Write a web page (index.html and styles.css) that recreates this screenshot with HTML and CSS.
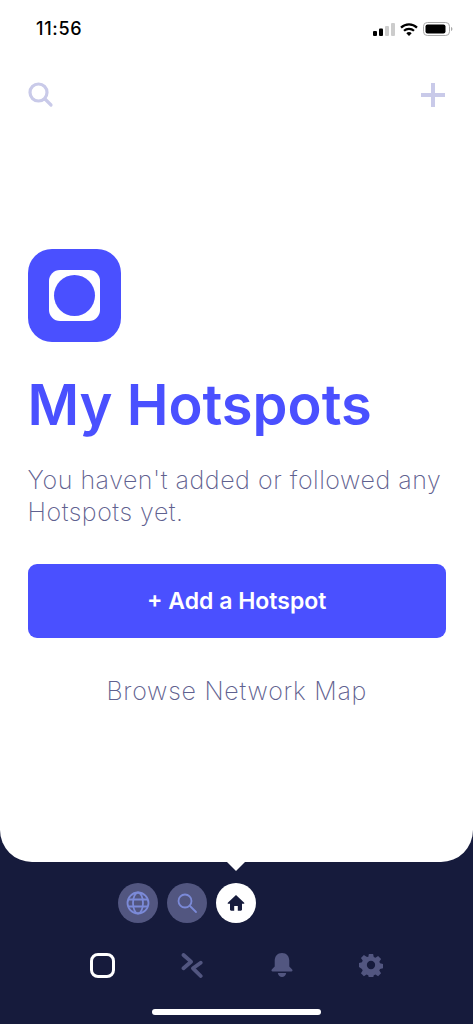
FILE: index.html
```html
<!DOCTYPE html>
<html lang="en">
<head>
    <meta charset="UTF-8">
    <meta name="viewport" content="width=device-width, initial-scale=1.0">
    <title>My Hotspots</title>
    <link rel="stylesheet" href="styles.css">
</head>
<body>
    <div class="screen">
        <div class="sheet">
            <div class="status-bar">
                <span class="clock">11:56</span>
                <div class="status-icons">
                    <svg width="22" height="13" viewBox="0 0 22 13">
                        <rect x="0" y="8" width="4" height="5" rx="1" fill="#000"/>
                        <rect x="6" y="5.5" width="4" height="7.5" rx="1" fill="#000"/>
                        <rect x="12" y="3" width="4" height="10" rx="1" fill="#ccc"/>
                        <rect x="18" y="0" width="4" height="13" rx="1" fill="#ccc"/>
                    </svg>
                    <svg width="18" height="13" viewBox="0 0 18 13">
                        <path d="M1 4.6a11.5 11.5 0 0 1 16 0" fill="none" stroke="#000" stroke-width="2.2"/>
                        <path d="M4 7.8a7.2 7.2 0 0 1 10 0" fill="none" stroke="#000" stroke-width="2.2"/>
                        <path d="M6.3 10.2a3.6 3.6 0 0 1 5.4 0L9 13z" fill="#000"/>
                    </svg>
                    <svg width="30" height="14" viewBox="0 0 30 14">
                        <rect x="0.5" y="0.5" width="26" height="13" rx="3.8" fill="none" stroke="#aaa"/>
                        <rect x="2.5" y="2.5" width="20" height="9" rx="2" fill="#000"/>
                        <path d="M28 5v4c.9-.3 1.4-1.100 1.400-2s-.5-1.700-1.400-2z" fill="#aaa"/>
                    </svg>
                </div>
            </div>

            <div class="top-actions">
                <svg width="26" height="26" viewBox="0 0 26 26">
                    <circle cx="10.500" cy="10.500" r="8.500" fill="none" stroke="#c9cae9" stroke-width="3.200"/>
                    <path d="M17 17l6 6" stroke="#c9cae9" stroke-width="3.200" stroke-linecap="round"/>
                </svg>
                <svg width="26" height="26" viewBox="0 0 26 26">
                    <path d="M13 1v24M1 13h24" stroke="#c9cae9" stroke-width="4"/>
                </svg>
            </div>

            <div class="content">
                <div class="logo">
                    <div class="logo-inner"><div class="logo-dot"></div></div>
                </div>
                <h1>My Hotspots</h1>
                <p class="intro">You haven't added or followed any Hotspots yet.</p>
                <button class="add-btn">+ Add a Hotspot</button>
                <a class="browse">Browse Network Map</a>
            </div>
            <div class="sheet-arrow"></div>
        </div>

        <div class="dock">
            <div class="switcher">
                <div class="round round-dim">
                    <svg width="24" height="24" viewBox="0 0 24 24" fill="none" stroke="#7b8ad8" stroke-width="1.800">
                        <circle cx="12" cy="12" r="10.500"/>
                        <ellipse cx="12" cy="12" rx="5" ry="10.500"/>
                        <path d="M2 8.500h20M2 15.500h20"/>
                    </svg>
                </div>
                <div class="round round-dim">
                    <svg width="22" height="22" viewBox="0 0 22 22" fill="none" stroke="#7b8ad8" stroke-width="1.800">
                        <circle cx="9" cy="9" r="6.500"/>
                        <path d="M14 14l6 6" stroke-linecap="round"/>
                    </svg>
                </div>
                <div class="round round-on">
                    <svg width="18" height="18" viewBox="0 0 18 18">
                        <path d="M9 1L.8 8.700c-.4.500 0 1.100.5 1.100H3v5.700c0 .7.500 1.200 1.200 1.200h3V12h3.600v4.700h3c.7 0 1.200-.5 1.200-1.200V9.800h1.700c.5 0 .9-.6.500-1.100z" fill="#161b3c"/>
                    </svg>
                </div>
            </div>
            <div class="tabs">
                <div class="tab-icon"><div class="tab-square"></div></div>
                <div class="tab-icon">
                    <svg width="22" height="25" viewBox="0 0 22 25" fill="none" stroke="#525680" stroke-width="3.800" stroke-linecap="round" stroke-linejoin="round">
                        <path d="M2.500 2L10 8.700l-7.500 6.600"/>
                        <path d="M19.700 9.700L12 15.300l7.700 7.700"/>
                    </svg>
                </div>
                <div class="tab-icon">
                    <svg width="22" height="25" viewBox="0 0 22 25">
                        <path d="M11 0c-4.600 0-7.300 3.300-7.300 7.800v5.700L.8 16.400c-.7.800-.3 2 .9 2h18.600c1.200 0 1.600-1.200.9-2l-2.900-2.900V7.800C18.300 3.300 15.600 0 11 0z" fill="#525680"/>
                        <path d="M6.800 20h8.400c-.5 2.700-2.200 4-4.200 4s-3.700-1.300-4.200-4z" fill="#525680"/>
                    </svg>
                </div>
                <div class="tab-icon">
                    <svg width="24" height="24" viewBox="-1 -1 26 26">
                        <path fill="#525680" fill-rule="evenodd" d="M9.700 0h4.600l.7 3.400 1.800.8 2.900-1.900 3.200 3.200-1.900 2.900.8 1.800 3.200.7v4.600l-3.200.7-.8 1.800 1.900 2.900-3.200 3.200-2.900-1.900-1.800.8-.7 3H9.700l-.7-3-1.800-.8-2.900 1.900-3.200-3.200 1.900-2.900-.8-1.800L-1 14.300V9.700l3.200-.7.8-1.800-1.900-2.900 3.200-3.200 2.900 1.900L9 3.400zM12 7.500a4.500 4.500 0 1 0 0 9 4.500 4.500 0 0 0 0-9z"/>
                    </svg>
                </div>
            </div>
            <div class="home-bar"></div>
        </div>
    </div>
</body>
</html>
```

FILE: styles.css
```css
* {
    box-sizing: border-box;
}
html, body {
    margin: 0;
    padding: 0;
}
body {
    font-family: Inter, "Liberation Sans", sans-serif;
    background-color: #161b3c;
}
.screen {
    width: 473px;
    height: 1024px;
    display: flex;
    flex-direction: column;
    overflow: hidden;
    background-color: #161b3c;
}
.sheet {
    position: relative;
    height: 862px;
    flex-shrink: 0;
    background: white;
    border-radius: 0 0 32px 32px;
}
.sheet-arrow {
    position: absolute;
    left: 227px;
    bottom: -9px;
    width: 0;
    height: 0;
    border-left: 9px solid transparent;
    border-right: 9px solid transparent;
    border-top: 9px solid white;
}
.status-bar {
    height: 57px;
    padding: 18px 20px 0 36px;
    display: flex;
    justify-content: space-between;
    align-items: flex-start;
}
.clock {
    font-size: 18px;
    font-weight: 500;
    line-height: 22px;
    letter-spacing: 0.7px;
    color: #000;
}
.status-icons {
    display: flex;
    align-items: center;
    gap: 5px;
    padding-top: 4px;
}
.top-actions {
    height: 50px;
    padding: 25px 27px 0 28px;
    display: flex;
    justify-content: space-between;
}
.content {
    padding: 142px 27px 0 27.500px;
}
.logo {
    width: 93px;
    height: 93px;
    background-color: #4a50ff;
    border-radius: 24px;
    display: flex;
    align-items: center;
    justify-content: center;
}
.logo-inner {
    width: 51px;
    height: 51px;
    background: white;
    border-radius: 11px;
    display: flex;
    align-items: center;
    justify-content: center;
}
.logo-dot {
    width: 41px;
    height: 41px;
    background-color: #4a50ff;
    border-radius: 50%;
}
h1 {
    margin: 27px 0 0;
    font-size: 56px;
    line-height: 72px;
    font-weight: 600;
    color: #4a50ff;
}
.intro {
    margin: 23px 0 0;
    font-size: 25px;
    line-height: 32px;
    font-weight: 200;
    letter-spacing: 0.54px;
    color: #5f618f;
}
.add-btn {
    display: block;
    width: 100%;
    height: 74px;
    margin-top: 36px;
    background-color: #4a50ff;
    border: none;
    border-radius: 9px;
    color: white;
    font-family: inherit;
    font-size: 23px;
    font-weight: 600;
}
.browse {
    display: block;
    margin-top: 36px;
    text-align: center;
    font-size: 25px;
    line-height: 34px;
    font-weight: 200;
    letter-spacing: 0.75px;
    color: #5f618f;
}
.dock {
    flex: 1;
    position: relative;
}
.switcher {
    display: flex;
    gap: 9px;
    padding: 21px 0 0 118.300px;
}
.round {
    width: 40px;
    height: 40px;
    border-radius: 50%;
    display: flex;
    align-items: center;
    justify-content: center;
}
.round-dim {
    background-color: #525680;
}
.round-on {
    background-color: white;
}
.tabs {
    display: flex;
    margin-top: 29px;
    padding-left: 58px;
}
.tab-icon {
    width: 89.500px;
    height: 26px;
    display: flex;
    align-items: center;
    justify-content: center;
}
.tab-square {
    width: 25px;
    height: 25px;
    border: 3px solid white;
    border-radius: 8px;
}
.home-bar {
    position: absolute;
    left: 152px;
    bottom: 9px;
    width: 169px;
    height: 6px;
    border-radius: 3px;
    background: white;
}
```
